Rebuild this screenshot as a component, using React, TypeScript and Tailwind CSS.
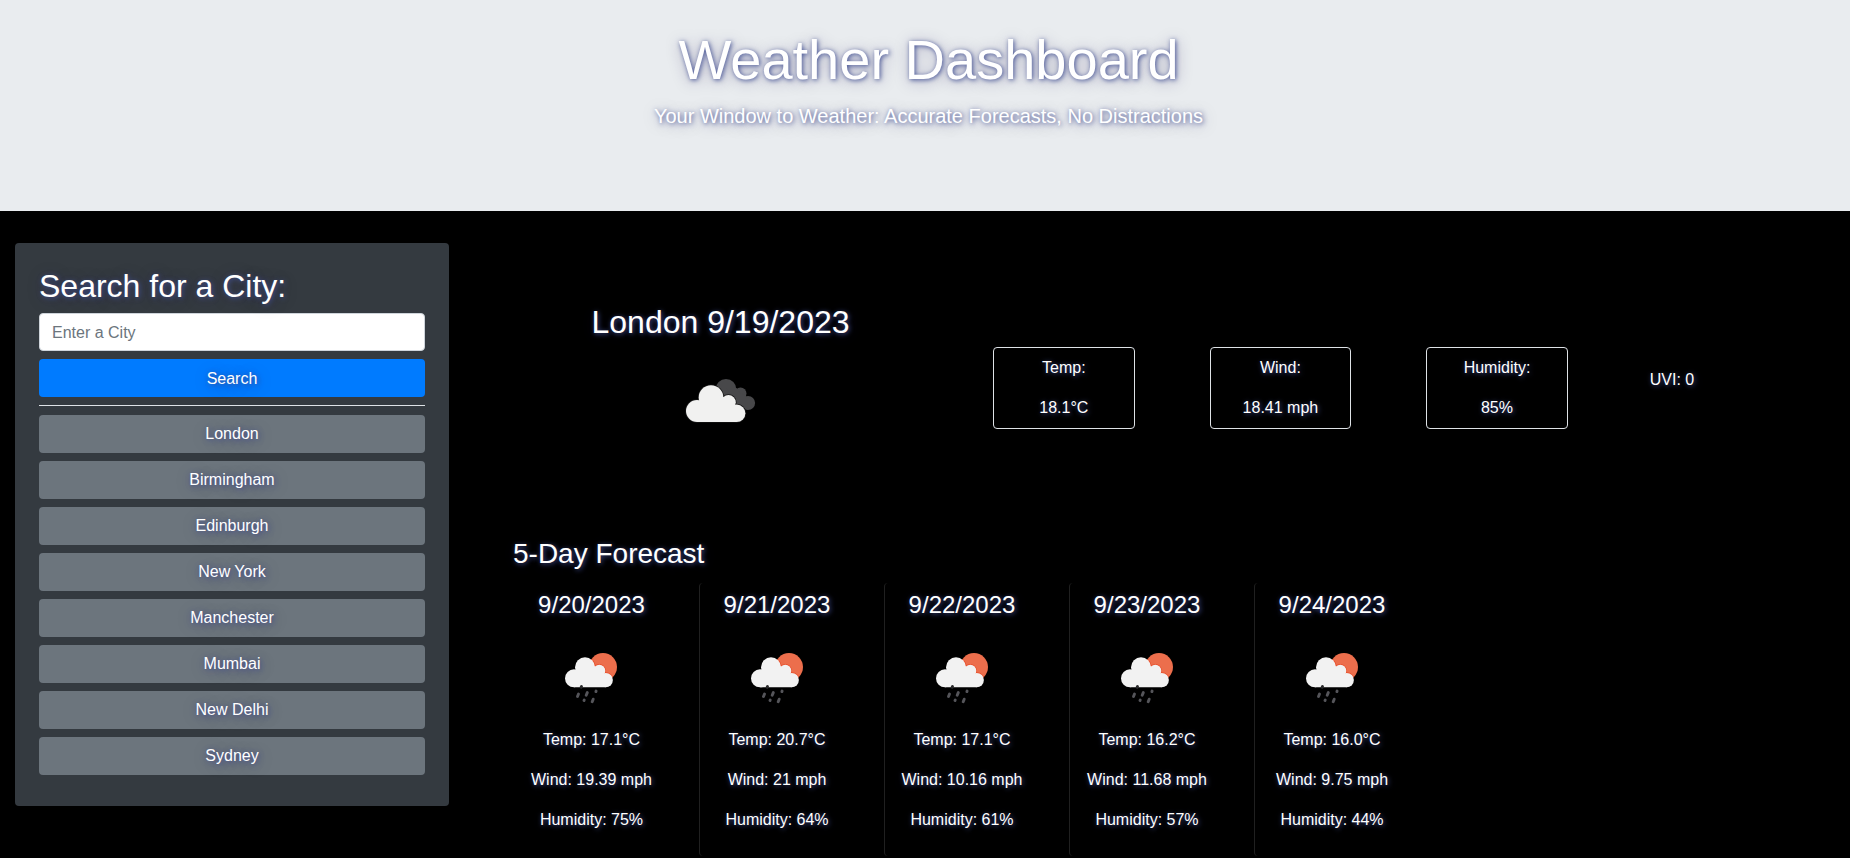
import React from "react";

const cities = ["London", "Birmingham", "Edinburgh", "New York", "Manchester", "Mumbai", "New Delhi", "Sydney"];

const current = [
  { label: "Temp:", value: "18.1°C" },
  { label: "Wind:", value: "18.41 mph" },
  { label: "Humidity:", value: "85%" },
];

const days = [
  { date: "9/20/2023", temp: "17.1°C", wind: "19.39 mph", humidity: "75%" },
  { date: "9/21/2023", temp: "20.7°C", wind: "21 mph", humidity: "64%" },
  { date: "9/22/2023", temp: "17.1°C", wind: "10.16 mph", humidity: "61%" },
  { date: "9/23/2023", temp: "16.2°C", wind: "11.68 mph", humidity: "57%" },
  { date: "9/24/2023", temp: "16.0°C", wind: "9.75 mph", humidity: "44%" },
];

function CloudFront() {
  return (
    <>
      <circle cx="26" cy="62" r="11" />
      <circle cx="40" cy="48.5" r="12.3" />
      <circle cx="57.5" cy="53.300" r="7.300" />
      <circle cx="65.700" cy="64.300" r="8.700" />
      <path d="M26 73V54L35.500 46H47.500L57.500 50L65.700 60V73Z" />
    </>
  );
}

function Clouds() {
  return (
    <svg className="h-[100px] w-[100px]" viewBox="0 0 100 100">
      <g fill="#48484a">
        <circle cx="55" cy="40.400" r="10.400" />
        <circle cx="69.500" cy="44.400" r="6" />
        <circle cx="77" cy="54" r="7.100" />
        <path d="M55.500 39H65.500L69.500 44L75.500 47.500L77 61L65.500 56Z" />
      </g>
      <g fill="#151515" stroke="#151515" strokeWidth="1.6">
        <CloudFront />
      </g>
      <g fill="#f1f1f0">
        <CloudFront />
      </g>
    </svg>
  );
}

function RainCloud() {
  return (
    <>
      <circle cx="20" cy="37.300" r="9" />
      <circle cx="31" cy="26.200" r="10" />
      <circle cx="45.300" cy="29.800" r="6" />
      <circle cx="51.700" cy="39.100" r="7.200" />
      <path d="M20 46.300V31L26 24H38L45.300 28L51.700 36V46.300Z" />
    </>
  );
}

function SunRain({ id }: { id: string }) {
  return (
    <svg className="h-[75px] w-[75px]" viewBox="0 0 75 75">
      <clipPath id={id}>
        <circle cx="49" cy="26.100" r="14" />
      </clipPath>
      <circle cx="49" cy="26.100" r="14" fill="#ec6e4c" />
      <g clipPath={`url(#${id})`} fill="none" stroke="#e8502c" strokeWidth="1.400">
        <RainCloud />
      </g>
      <g fill="#f2f2f2">
        <RainCloud />
      </g>
      <g stroke="#55555a" strokeWidth="2.900" strokeLinecap="round">
        <path d="M27.100 46.300L27.500 45.500" stroke="#2a2a2b" />
        <path d="M23.500 55.500L24.500 53" />
        <path d="M32.200 54.200L33.300 51.600" />
        <path d="M41.900 50.600L42.100 50.100" />
        <path d="M30 59.500L30.200 59.100" />
        <path d="M38.200 60.700L39.200 58.200" />
      </g>
    </svg>
  );
}

export default function App() {
  return (
    <div className="h-[858px] overflow-hidden bg-black font-['Liberation_Sans',Arial,sans-serif] text-base leading-6 text-white [text-shadow:1px_1px_5px_#414f92,1px_2px_15px_rgba(40,30,90,0.35)]">
      <header className="h-[211px] bg-[#e9ecef] pt-[26px] pl-[7px] text-center">
        <h1 className="mb-2 text-[56px] leading-[67px]">Weather Dashboard</h1>
        <p className="text-xl leading-[30px]">Your Window to Weather: Accurate Forecasts, No Distractions</p>
      </header>

      <div className="flex">
        <aside className="mt-8 ml-[15px] h-[563px] w-[434px] shrink-0 rounded bg-[#343a40] p-6">
          <h2 className="mb-2 text-[32px] leading-[38px]">Search for a City:</h2>
          <input
            placeholder="Enter a City"
            className="block h-[38px] w-full rounded border border-[#ced4da] bg-white px-3 pt-0.5 text-base text-[#495057] [text-shadow:none] placeholder:text-[#6c757d]"
          />
          <button className="mt-2 block h-[38px] w-full rounded bg-[#007bff] pt-0.5 [text-shadow:inherit]">Search</button>
          <hr className="mt-2 mb-[9px] border-t border-[#dee2e6]" />
          <div className="flex flex-col gap-2">
            {cities.map((city) => (
              <button key={city} className="h-[38px] w-full rounded bg-[#6c757d] [text-shadow:inherit]">
                {city}
              </button>
            ))}
          </div>
        </aside>

        <main className="flex-1 pl-16">
          <section className="flex h-[326px] items-start">
            <div className="mt-[92px] flex w-[415px] flex-col items-center">
              <h2 className="mb-2 text-[32px] leading-[38px]">London 9/19/2023</h2>
              <Clouds />
            </div>
            <div className="mt-[136px] ml-[65px] flex gap-[75px] text-center">
              {current.map((item) => (
                <div key={item.label} className="flex h-[82px] w-[141.600px] flex-col gap-4 rounded border border-[#dee2e6] pt-2">
                  <p>{item.label}</p>
                  <p>{item.value}</p>
                </div>
              ))}
            </div>
            <p className="mt-[157px] ml-[82px]">UVI: 0</p>
          </section>

          <section>
            <h3 className="mb-3 text-[28px] leading-[34px]">5-Day Forecast</h3>
            <div className="flex">
              {days.map((day, index) => (
                <article
                  key={day.date}
                  className="flex h-[273px] w-[185px] flex-col items-center rounded border-l border-[#202020] pt-[7px] pr-[30px] first:w-[186px] first:border-transparent"
                >
                  <h4 className="mb-[22px] text-2xl leading-[29px]">{day.date}</h4>
                  <SunRain id={`sun-${index}`} />
                  <div className="mt-3 flex flex-col gap-4 text-center">
                    <p>Temp: {day.temp}</p>
                    <p>Wind: {day.wind}</p>
                    <p>Humidity: {day.humidity}</p>
                  </div>
                </article>
              ))}
            </div>
          </section>
        </main>
      </div>
    </div>
  );
}
